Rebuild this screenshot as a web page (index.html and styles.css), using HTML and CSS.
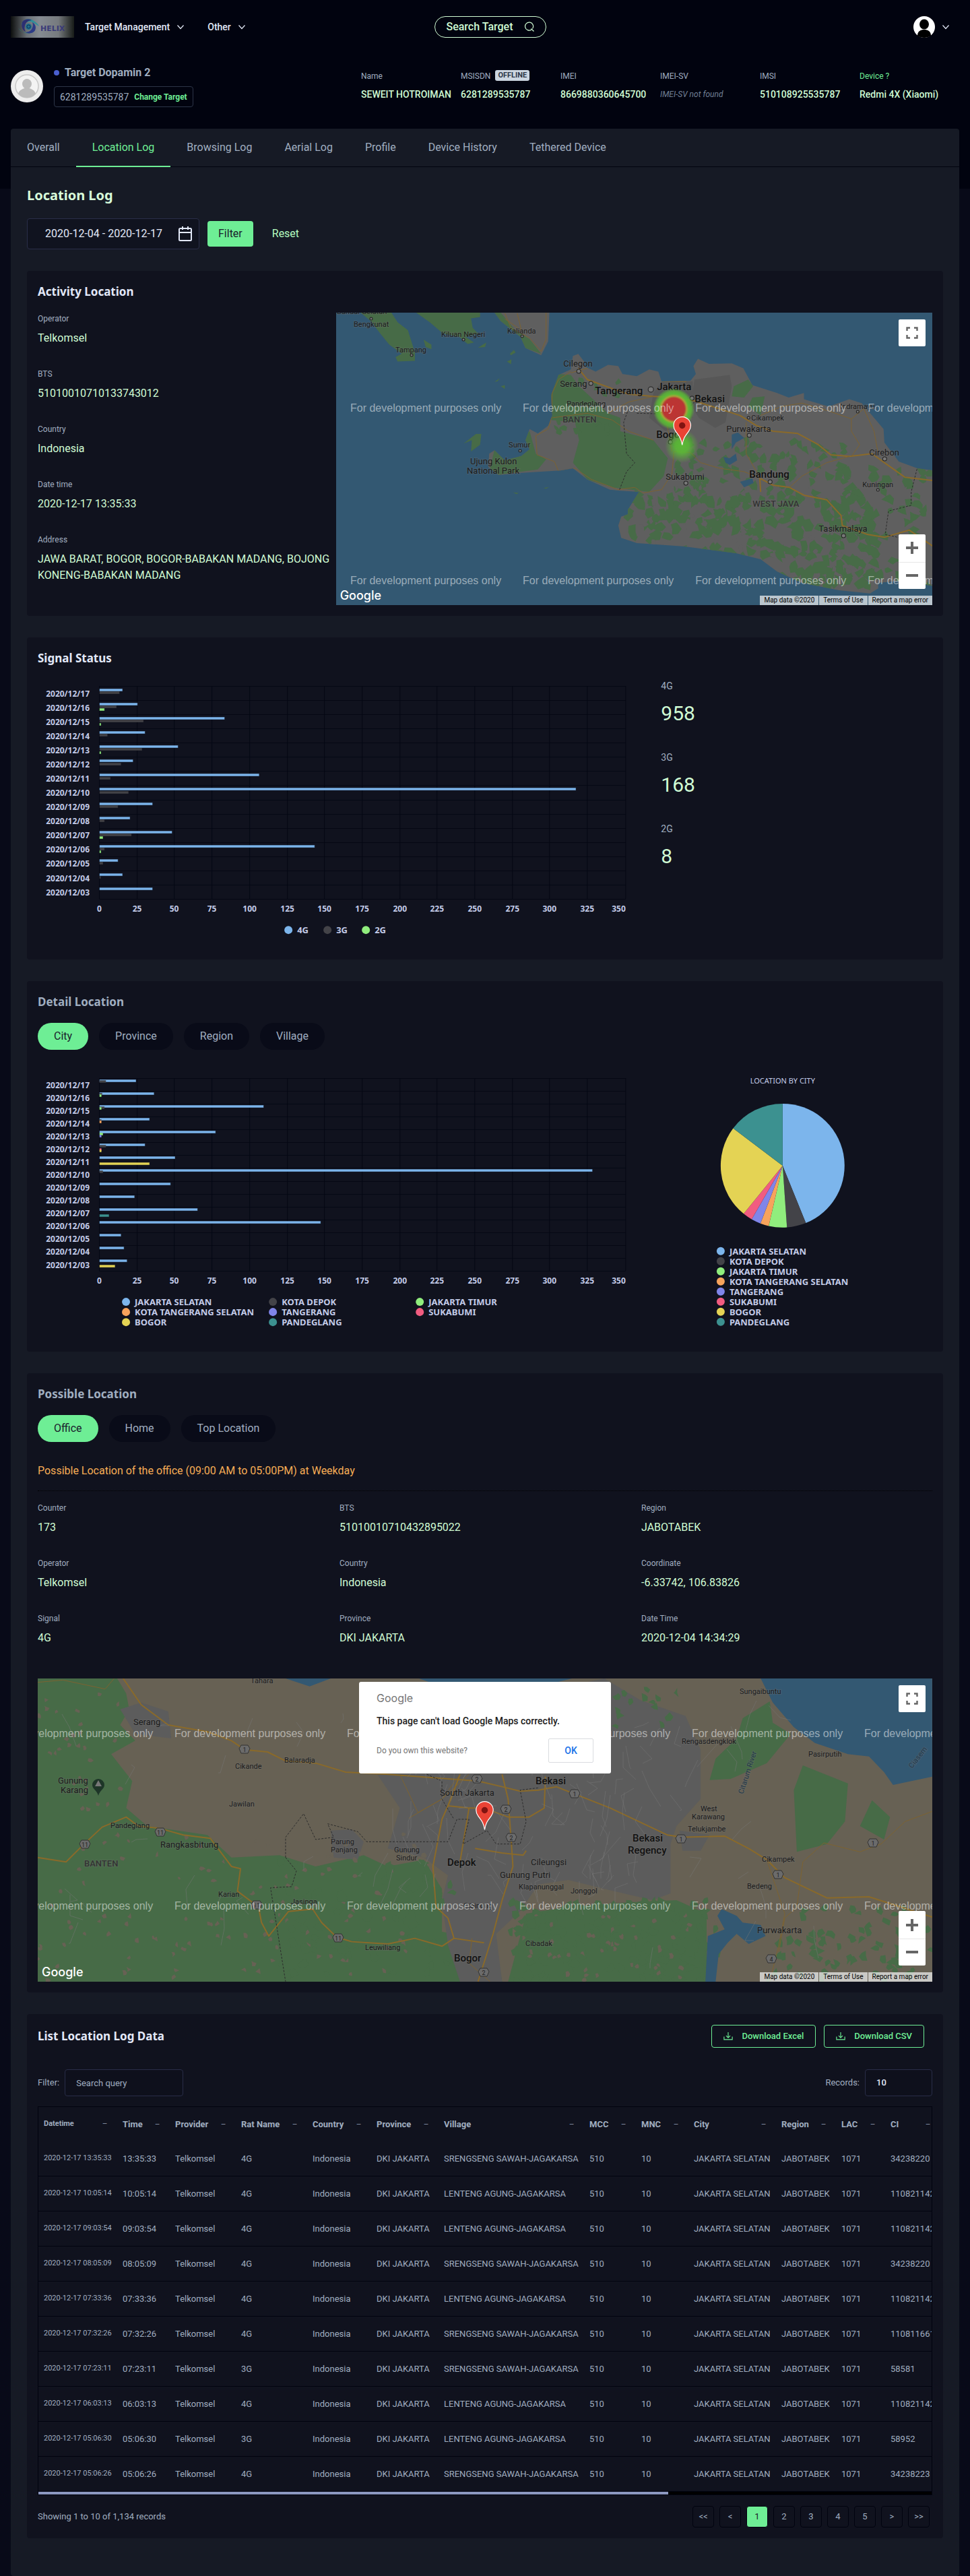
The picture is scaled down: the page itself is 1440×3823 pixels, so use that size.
FILE: index.html
```html
<!DOCTYPE html>
<html lang="en">
<head>
<meta charset="utf-8">
<title>Helix - Location Log</title>
<meta name="viewport" content="width=device-width, initial-scale=1">
<link rel="stylesheet" href="styles.css">
</head>
<body>
<svg class="defs" width="0" height="0" aria-hidden="true">
  <symbol id="chevron" viewBox="0 0 16 16"><path d="M3.500 5.500 8 10.500l4.500-5" fill="none" stroke="currentColor" stroke-width="1.200"/></symbol>
  <symbol id="download" viewBox="0 0 16 16"><path d="M8 1v9M4.500 7 8 10.500 11.500 7M1 8.500v5h14v-5" fill="none" stroke="currentColor" stroke-width="1.300"/></symbol>
  <symbol id="fullscreen" viewBox="0 0 18 18"><path d="M1.500 6V1.500H6M12 1.500h4.500V6M16.500 12v4.500H12M6 16.500H1.500V12" fill="none" stroke="#666" stroke-width="2.400"/></symbol>
  <symbol id="pin" viewBox="0 0 27 43"><path d="M13.500.7C6.400.7.8 6.400.8 13.400c0 3.600 1.200 6.300 3.200 9 5 6.600 7.900 9.700 9.500 20 1.600-10.300 4.500-13.400 9.500-20 2-2.700 3.200-5.400 3.200-9C26.200 6.400 20.600.7 13.500.7z" fill="#ea4335" stroke="#fff" stroke-width="1.200"/><circle cx="13.500" cy="13.500" r="4.700" fill="#811411"/></symbol>
</svg>

<header class="topbar">
  <nav class="topnav">
    <a class="logo" href="#" aria-label="Helix">
      <svg viewBox="0 0 94 32" width="94" height="32">
        <defs><linearGradient id="metal"><stop offset="0" stop-color="#0c0e0d"/><stop offset=".25" stop-color="#6b7076"/><stop offset=".45" stop-color="#858b92"/><stop offset=".75" stop-color="#767a7e"/><stop offset="1" stop-color="#171b18"/></linearGradient></defs>
        <rect width="94" height="32" fill="url(#metal)"/>
        <path d="M11 17c3 7 12 10 24 5-4 5-14 4-18 1-3-2-5-4-6-6z" fill="#23807f"/>
        <path d="M16 13c1-8 10-12 18-6 3 2 6 4 8 8-8-5-10-7-15-7-5 1-8 3-11 5z" fill="#2f8f99"/>
        <path d="M17 9c2-4 9-6 14-3-7 1-9 4-10 8-1 3-1 6 1 9-5-2-7-9-5-14z" fill="#2c2f72"/>
        <path d="M36 21c-2 4-9 6-14 3 7-1 9-4 10-7 1-3 1-5 0-8 5 3 6 8 4 12z" fill="#2c3a86"/>
        <circle cx="26.500" cy="15.500" r="4.500" fill="#1c6f8c"/><circle cx="26.500" cy="15.500" r="2.500" fill="none" stroke="#132a56"/>
        <text x="44" y="22" class="logo-text">HELIX</text>
      </svg>
    </a>
    <button class="nav-item" type="button">Target Management <svg width="16" height="16"><use href="#chevron"/></svg></button>
    <button class="nav-item" type="button">Other <svg width="16" height="16"><use href="#chevron"/></svg></button>
  </nav>
  <button class="search-btn" type="button">Search Target
    <svg width="16" height="16" viewBox="0 0 16 16"><path d="M11 12a6 6 0 1 1 1.500-1.500M10.500 10.500l4 4" fill="none" stroke="currentColor" stroke-width="1.200"/></svg>
  </button>
  <button class="user-btn" type="button" aria-label="Account">
    <svg width="32" height="32" viewBox="0 0 32 32"><circle cx="16" cy="16" r="16" fill="#fff"/><ellipse cx="16" cy="12" rx="7" ry="7.500" fill="#000"/><path d="M6 29c0-7 5-9 10-9s10 2 10 9c-3 2-6 3-10 3s-7-1-10-3z" fill="#000"/></svg>
    <svg width="16" height="16"><use href="#chevron"/></svg>
  </button>
</header>

<section class="target">
  <svg class="avatar" width="48" height="48" viewBox="0 0 48 48"><circle cx="24" cy="24" r="24" fill="#ededed"/><circle cx="24" cy="24" r="17" fill="#f3f3f3" stroke="#c8c8c8" stroke-width="1.500"/><ellipse cx="24" cy="20.500" rx="7" ry="7.500" fill="#bbb"/><path d="M11 35c2-6 7-7 9-8h8c2 1 7 2 9 8a17 17 0 0 1-26 0z" fill="#bbb"/></svg>
  <div class="target-id">
    <div class="target-name"><span class="dot"></span>Target Dopamin 2</div>
    <div class="target-number">6281289535787 <a href="#">Change Target</a></div>
  </div>
  <dl class="info">
    <div><dt>Name</dt><dd>SEWEIT HOTROIMAN</dd></div>
    <div><dt>MSISDN <span class="badge">OFFLINE</span></dt><dd>6281289535787</dd></div>
    <div><dt>IMEI</dt><dd>8669880360645700</dd></div>
    <div><dt>IMEI-SV</dt><dd class="missing">IMEI-SV not found</dd></div>
    <div><dt>IMSI</dt><dd>510108925535787</dd></div>
    <div><dt><a href="#">Device ?</a></dt><dd>Redmi 4X (Xiaomi)</dd></div>
  </dl>
</section>

<main class="content">
  <nav class="tabs">
    <a href="#">Overall</a><a href="#" class="active">Location Log</a><a href="#">Browsing Log</a><a href="#">Aerial Log</a><a href="#">Profile</a><a href="#">Device History</a><a href="#">Tethered Device</a>
  </nav>
  <div class="page">
    <h1>Location Log</h1>
    <form class="filter-row">
      <div class="date-box">
        <input type="text" aria-label="Date range" value="2020-12-04 - 2020-12-17">
        <svg width="20" height="22" viewBox="0 0 20 22"><path d="M2.500 3h15a1.500 1.500 0 0 1 1.500 1.500v15a1.500 1.500 0 0 1-1.500 1.500h-15A1.500 1.500 0 0 1 1 19.500v-15A1.500 1.500 0 0 1 2.500 3zM1 9h18M6 0v5M14 0v5" fill="none" stroke="currentColor" stroke-width="2"/></svg>
      </div>
      <button class="btn-filter" type="button">Filter</button>
      <button class="btn-reset" type="reset">Reset</button>
    </form>

    <section class="panel">
      <h2>Activity Location</h2>
      <div class="activity">
        <dl class="fields">
          <div><dt>Operator</dt><dd>Telkomsel</dd></div>
          <div><dt>BTS</dt><dd>51010010710133743012</dd></div>
          <div><dt>Country</dt><dd>Indonesia</dd></div>
          <div><dt>Date time</dt><dd>2020-12-17 13:35:33</dd></div>
          <div><dt>Address</dt><dd>JAWA BARAT, BOGOR, BOGOR-BABAKAN MADANG, BOJONG KONENG-BABAKAN MADANG</dd></div>
        </dl>
        <div class="map map-activity">
          <svg class="map-canvas" viewBox="0 0 885 434" preserveAspectRatio="xMidYMid slice">
            <defs>
              <clipPath id="java"><path transform="translate(-19 -24) scale(.6122 .3333)" d="M618 256 632 290V310L660 335 690 305 715 310 725 345 760 355 790 325 812 335 820 378 890 375 903 345 897 310 908 278 935 300 990 298 1018 320 1040 395 1100 430 1128 450 1165 430V458L1225 490 1275 458 1305 475 1358 590 1360 650 1395 735 1440 765 1480 775V1290L1400 1265 1345 1275V1300L1325 1322 1250 1308 1160 1275 1100 1225 1060 1170 1000 1143 870 1112 760 1098 722 1075 715 1020 722 980 738 970V950L765 870 720 865 695 860 640 815 605 765 575 775 480 785 425 795 400 760 402 700 415 685 440 730 480 710 500 680 490 640 500 590 520 610 545 575 555 530 552 440 560 400 570 350 600 325 605 265z"/></clipPath>
              <radialGradient id="heat"><stop offset="0" stop-color="#bf3333"/><stop offset=".52" stop-color="#b93633"/><stop offset=".62" stop-color="#a5a33a"/><stop offset=".72" stop-color="#5bb936"/><stop offset=".85" stop-color="#5bb936" stop-opacity=".8"/><stop offset="1" stop-color="#5bb936" stop-opacity="0"/></radialGradient>
              <radialGradient id="warm"><stop offset="0" stop-color="#5bb936"/><stop offset=".4" stop-color="#5bb936" stop-opacity=".9"/><stop offset="1" stop-color="#5bb936" stop-opacity="0"/></radialGradient>
            </defs>
            <rect width="885" height="434" fill="#335872"/>
            <g transform="translate(-19 -24) scale(.6122 .3333)" fill="#476b47">
              <path d="M90 72H165L180 115 205 150 222 250V287L180 290 175 270 190 255 160 215 140 170 115 110z"/>
              <path d="M225 72H380V92L358 98 362 140 375 165 345 180 365 205 350 212 330 180 290 165 258 115z"/>
              <path d="M415 72H548L545 200 528 262 490 230 478 180 430 110z" fill="#5f5f5f"/>
              <path d="M415 72H430L465 150 500 190 528 255 490 230 478 180 430 110z"/>
              <path d="M340 655 370 612H383L380 660 358 690 360 640zM243 192 262 215V235L248 225zM375 228 395 205 392 225zM452 255 462 238 466 250 455 262zM445 290 456 280 455 302zM430 400 440 395V412zM415 380 428 364 422 378zM460 872 474 875 468 880zM534 853 547 848 540 856z"/>
            </g>
            <g clip-path="url(#java)">
              <rect width="885" height="434" fill="#5f5f5f"/>
              <g transform="translate(-19 -24) scale(.6122 .3333)">
                <path d="M570 345 600 350 620 400 690 520 720 540V600L800 640 835 720 825 800 790 870 700 850 640 815 605 740 620 640 610 560 552 550V400zM415 680 500 600 515 700 540 725 520 770 400 800zM995 400 1030 370 1042 400 1020 450 990 445zM1040 450 1070 445 1060 530 1030 490z" fill="#476b47"/>
                <path d="M900 370 985 350 990 400 975 560 950 585 910 540 890 480zM820 380 895 378V540L830 600 790 540 800 430z" fill="#575757"/>
              </g>
              <g id="activity-forest" fill="#476b47"></g>
              <g transform="translate(-19 -24) scale(.6122 .3333)" fill="#335872"><path d="M990 615 1005 605 1020 630 1000 650 990 680zM970 715 985 720 1000 700 1003 730 985 750 975 740zM1010 825 1040 810 1043 830 1020 850z"/></g>
              <g class="roads" transform="translate(-19 -24) scale(.6122 .3333)">
                <path d="M618 320 640 370 700 410 740 435 800 445 850 450 900 465 960 500 1010 530 1050 575 1090 600 1150 610 1200 660 1230 705 1275 712 1330 700 1360 740 1410 805 1480 820M1060 870 1058 810 1090 840 1130 850 1165 885 1220 905 1255 975 1258 1020 1320 1060 1360 1072 1420 1040 1480 1115"/>
                <path class="minor" d="M600 335 570 370 555 430 553 540 545 590 515 620 518 705 560 735 570 778 610 765 650 815 715 860 755 850 775 875 820 860 845 790 850 690 890 695 915 740 960 765 1020 780 1060 810M850 450 830 540 845 690M1025 560V700L1060 810M1275 712 1220 740 1160 800 1130 850M1280 712 1300 660 1280 600V545L1225 510 1160 475 1110 490 1060 530M1280 545 1310 500 1335 600 1345 700M600 340 640 320M555 540 640 520 700 550 740 600 800 640M690 520 740 470 800 445M820 378 880 380"/>
                <path class="border" d="M740 500 728 560 735 700 755 740 735 780 718 860M1445 725 1425 870 1425 930 1370 955 1362 1060 1400 1075M760 520 870 525 905 460"/>
              </g>
            </g>
            <g class="roads" transform="translate(-19 -24) scale(.6122 .3333)"><path class="minor" d="M540 72V190L528 245 500 185 455 140 440 75M440 100 480 150 470 75"/></g>
            <g class="places">
              <text x="1" y="2">Bandar Selatan</text>
              <text x="26" y="21">Bengkunat</text><text x="156" y="36">Kiluan Negeri</text><text x="254" y="31">Kalianda</text><text x="88" y="59">Tampang</text><text x="256" y="200">Sumur</text><text x="342" y="139">Pandeglang</text><text x="616" y="160">Cikampek</text><text x="748" y="143">Indramayu</text><text x="781" y="259">Kuningan</text>
              <g class="mid"><text x="337" y="80">Cilegon</text><text x="332" y="110">Serang</text><text x="579" y="177">Purwakarta</text><text x="489" y="248">Sukabumi</text><text x="791" y="212">Cirebon</text><text x="716" y="325">Tasikmalaya</text><text x="199" y="225">Ujung Kulon</text><text x="194" y="239">National Park</text></g>
              <g class="big"><text x="384" y="121">Tangerang</text><text x="476" y="115">Jakarta</text><text x="532" y="133">Bekasi</text><text x="475" y="186">Bogor</text><text x="613" y="245">Bandung</text></g>
              <g class="region"><text x="336" y="163">BANTEN</text><text x="618" y="288">WEST JAVA</text></g>
            </g>
            <g class="towns"><circle cx="360" cy="87" r="3"/><circle cx="378" cy="105" r="3"/><circle cx="467" cy="114" r="4"/><circle cx="528" cy="127" r="3"/><circle cx="613" cy="182" r="3"/><circle cx="519" cy="253" r="3"/><circle cx="644" cy="251" r="3"/><circle cx="753" cy="331" r="3"/><circle cx="814" cy="217" r="3"/><circle cx="496" cy="192" r="3"/><circle cx="612" cy="156" r="2"/><circle cx="774" cy="147" r="2"/><circle cx="804" cy="263" r="2"/><circle cx="273" cy="205" r="2"/><circle cx="52" cy="9" r="2"/><circle cx="189" cy="40" r="2"/><circle cx="276" cy="35" r="2"/><circle cx="112" cy="63" r="2"/></g>
            <circle cx="501" cy="143" r="31" fill="url(#heat)"/><circle cx="513" cy="198" r="25" fill="url(#warm)"/>
            <g class="watermark"><text x="21" y="147">For development purposes only</text><text x="277" y="147">For development purposes only</text><text x="533" y="147">For development purposes only</text><text x="789" y="147">For development purposes only</text><text x="21" y="403">For development purposes only</text><text x="277" y="403">For development purposes only</text><text x="533" y="403">For development purposes only</text><text x="789" y="403">For development purposes only</text></g>
            <use href="#pin" x="500" y="154" width="27" height="43"/>
          </svg>
          <button class="map-btn map-full" type="button" aria-label="Fullscreen"><svg width="18" height="18"><use href="#fullscreen"/></svg></button>
          <div class="map-zoom"><button type="button" aria-label="Zoom in" class="plus"></button><button type="button" aria-label="Zoom out" class="minus"></button></div>
          <div class="map-brand">Google</div>
          <div class="map-legal"><span>Map data ©2020</span><a href="#">Terms of Use</a><a href="#">Report a map error</a></div>
        </div>
      </div>
    </section>

    <section class="panel">
      <h2>Signal Status</h2>
      <div class="split">
        <svg id="signal-chart" class="chart" viewBox="0 0 885 400"></svg>
        <dl class="totals">
          <div><dt>4G</dt><dd>958</dd></div>
          <div><dt>3G</dt><dd>168</dd></div>
          <div><dt>2G</dt><dd>8</dd></div>
        </dl>
      </div>
    </section>

    <section class="panel">
      <h2 class="muted">Detail Location</h2>
      <div class="pills"><button class="active" type="button">City</button><button type="button">Province</button><button type="button">Region</button><button type="button">Village</button></div>
      <div class="split detail">
        <svg id="city-chart" class="chart" viewBox="0 0 885 400"></svg>
        <svg id="city-pie" class="chart" viewBox="0 0 443 400"></svg>
      </div>
    </section>

    <section class="panel">
      <h2 class="muted">Possible Location</h2>
      <div class="pills"><button class="active" type="button">Office</button><button type="button">Home</button><button type="button">Top Location</button></div>
      <p class="notice">Possible Location of the office (09:00 AM to 05:00PM) at Weekday</p>
      <dl class="fields three">
        <div><dt>Counter</dt><dd>173</dd></div><div><dt>BTS</dt><dd>51010010710432895022</dd></div><div><dt>Region</dt><dd>JABOTABEK</dd></div>
        <div><dt>Operator</dt><dd>Telkomsel</dd></div><div><dt>Country</dt><dd>Indonesia</dd></div><div><dt>Coordinate</dt><dd>-6.33742, 106.83826</dd></div>
        <div><dt>Signal</dt><dd>4G</dd></div><div><dt>Province</dt><dd>DKI JAKARTA</dd></div><div><dt>Date Time</dt><dd>2020-12-04 14:34:29</dd></div>
      </dl>
      <div class="map map-possible">
        <svg class="map-canvas" viewBox="0 0 1328 450" preserveAspectRatio="xMidYMid slice">
          <rect width="1328" height="450" fill="#676154"/>
          <g transform="translate(-16 -21) scale(.8929 .3333)">
            <path d="M18 63H150L165 130 170 200 155 270 180 340 140 400 175 520 165 640 200 720 300 760 340 860 420 850 480 900 560 850 600 900 660 870 690 1000 690 1190 780 1240 790 1413H18z" fill="#476b47"/>
            <path d="M830 1110 900 1080 1000 1060 1080 1050 1130 1110 1130 1413H800zM1235 165 1240 260 1270 310 1230 440 1170 510 1135 515 1145 420 1180 330 1190 240zM1290 450 1365 530 1360 700 1330 800 1280 835 1275 560zM1405 605 1435 680 1425 780 1385 720z" fill="#476b47"/>
            <path d="M560 400 600 330 640 240 960 63 1020 160 1095 230 1120 380 1120 600 1080 720 1070 800 1070 1020 1040 1050 960 1000 900 960 850 980 820 1100 780 1200 790 1413H720L700 1250 690 1050 700 940 660 860 600 820 620 640zM155 200 190 170 235 210 240 330 180 310zM505 740 540 735 560 790 550 870 510 860zM1085 740 1135 760 1120 830 1090 830z" fill="#5c5c5c"/>
          </g>
          <g id="possible-forest"></g>
          <g transform="translate(-16 -21) scale(.8929 .3333)" fill="#335872"><path d="M1220 63H1505V500L1440 537 1425 480 1400 410 1365 400 1310 350 1275 280 1240 170zM430 63H505L470 98zM652 63H906L880 80H670zM1155 1090 1180 1120 1190 1150 1220 1160 1228 1210 1200 1245 1180 1200 1165 1240 1150 1290 1145 1413H1128L1132 1210 1160 1180 1148 1120z"/></g>
          <g class="roads" transform="translate(-16 -21) scale(.8929 .3333)">
            <path d="M160 63 190 180 235 270 300 300 340 340 362 380 400 390 430 430 480 440 530 480 600 490 750 520 790 545 820 565 850 560 880 545 970 640 1065 760 1090 770 1160 765 1200 820 1230 870 1260 950 1330 1040 1400 1035 1505 1125M18 860 65 880 95 800 125 725 165 680 185 720 220 730 260 760 305 775 340 900 355 910 350 1010 385 1080 390 1150 402 1210 435 1100 475 1090 490 1150 515 1215 540 1235 600 1245 645 1220 690 1255 710 1220 760 1240M720 490 705 600 690 690 675 900 680 1080 700 1130 710 1220M720 490 700 630 735 640 760 640 800 680 835 680 860 640 862 500M790 490 800 600 805 780 808 900 790 1050 775 1200 750 1413M745 820 790 840 825 850 830 830M735 640 720 880"/>
            <path class="minor" d="M18 80 60 70 130 110 145 63M620 490 650 660 690 600 735 490M635 685 690 600 720 490M1230 870 1260 1110 1250 1250 1235 1413M1505 655 1460 700 1420 800 1385 835 1325 795 1290 880 1280 1080 1260 1130 1250 1280M740 1220 735 1330 770 1413"/>
            <path class="border" d="M430 860 430 770 460 665 480 780 510 770 500 710 550 745 565 790 700 790 715 690 735 690 725 800 765 740 780 800 820 800 830 700 820 560 850 550M430 860 448 920 440 990 405 995 430 1413M690 600 710 690M665 490 690 520V600"/>
          </g>
          <g id="streets" class="streets"></g>
          <g class="places">
            <text x="316" y="7">Tahara</text><text x="366" y="125">Balaradja</text><text x="293" y="134">Cikande</text><text x="284" y="190">Jawilan</text><text x="108" y="222">Pandeglang</text><text x="435" y="246">Parung</text><text x="435" y="258">Panjang</text><text x="529" y="258">Gunung</text><text x="532" y="270">Sindur</text><text x="268" y="324">Karian</text><text x="376" y="335">Jasinga</text><text x="486" y="403">Leuwiliang</text><text x="714" y="313">Klapanunggal</text><text x="791" y="319">Jonggol</text><text x="724" y="397">Cibadak</text><text x="632" y="341">Cibinong</text><text x="1042" y="23">Sungaibuntu</text><text x="956" y="97">Rengasdengklok</text><text x="1144" y="116">Pasirputih</text><text x="984" y="197">West</text><text x="971" y="209">Karawang</text><text x="965" y="227">Telukjambe</text><text x="1075" y="272">Cikampek</text><text x="1053" y="312">Bedeng</text>
            <g class="mid"><text x="30" y="156">Gunung</text><text x="34" y="170">Karang</text><text x="142" y="69">Serang</text><text x="182" y="251">Rangkasbitung</text><text x="597" y="174">South Jakarta</text><text x="732" y="277">Cileungsi</text><text x="686" y="296">Gunung Putri</text><text x="1068" y="378">Purwakarta</text></g>
            <g class="big"><text x="608" y="278">Depok</text><text x="618" y="420">Bogor</text><text x="739" y="157">Bekasi</text><text x="883" y="242">Bekasi</text><text x="876" y="260">Regency</text></g>
            <g class="region"><text x="69" y="279">BANTEN</text></g>
            <text class="river" transform="translate(1047 172) rotate(-72)">Citarum River</text>
            <text class="river" transform="translate(1298 134) rotate(-52)">Ciasem</text>
          </g>
          <path d="M90 174c-2-8-9-10-9-16a9 9 0 0 1 18 0c0 6-7 8-9 16z" fill="#1e3528"/><path d="M85 160 90 151 95 160z" fill="#777"/>
          <g id="shields" class="shields"></g>
          <g class="watermark"><text x="-53" y="87">For development purposes only</text><text x="203" y="87">For development purposes only</text><text x="459" y="87">For development purposes only</text><text x="715" y="87">For development purposes only</text><text x="971" y="87">For development purposes only</text><text x="1227" y="87">For development purposes only</text><text x="-53" y="343">For development purposes only</text><text x="203" y="343">For development purposes only</text><text x="459" y="343">For development purposes only</text><text x="715" y="343">For development purposes only</text><text x="971" y="343">For development purposes only</text><text x="1227" y="343">For development purposes only</text></g>
          <use href="#pin" x="650" y="182" width="27" height="43"/>
        </svg>
        <div class="map-dialog">
          <div class="dialog-brand">Google</div>
          <p>This page can't load Google Maps correctly.</p>
          <div class="dialog-foot"><a href="#">Do you own this website?</a><button type="button">OK</button></div>
        </div>
        <button class="map-btn map-full" type="button" aria-label="Fullscreen"><svg width="18" height="18"><use href="#fullscreen"/></svg></button>
        <div class="map-zoom"><button type="button" aria-label="Zoom in" class="plus"></button><button type="button" aria-label="Zoom out" class="minus"></button></div>
        <div class="map-brand">Google</div>
        <div class="map-legal"><span>Map data ©2020</span><a href="#">Terms of Use</a><a href="#">Report a map error</a></div>
      </div>
    </section>

    <section class="panel">
      <div class="list-head">
        <h2>List Location Log Data</h2>
        <button class="btn-outline" type="button"><svg width="14" height="14"><use href="#download"/></svg>Download Excel</button>
        <button class="btn-outline" type="button"><svg width="14" height="14"><use href="#download"/></svg>Download CSV</button>
      </div>
      <div class="list-tools">
        <label for="q">Filter:</label><input id="q" class="field query" type="text" placeholder="Search query">
        <label for="records" class="push">Records:</label><select id="records" class="field records"><option>10</option><option>25</option></select>
      </div>
      <div class="table-box">
        <table>
          <colgroup><col class="w117"><col class="w78"><col class="w98"><col class="w106"><col class="w95"><col class="w100"><col class="w216"><col class="w77"><col class="w78"><col class="w130"><col class="w89"><col class="w73"><col class="w82"></colgroup>
          <thead><tr><th>Datetime</th><th>Time</th><th>Provider</th><th>Rat Name</th><th>Country</th><th>Province</th><th>Village</th><th>MCC</th><th>MNC</th><th>City</th><th>Region</th><th>LAC</th><th>CI</th></tr></thead>
          <tbody>
            <tr><td>2020-12-17 13:35:33</td><td>13:35:33</td><td>Telkomsel</td><td>4G</td><td>Indonesia</td><td>DKI JAKARTA</td><td>SRENGSENG SAWAH-JAGAKARSA</td><td>510</td><td>10</td><td>JAKARTA SELATAN</td><td>JABOTABEK</td><td>1071</td><td>34238220</td></tr>
            <tr><td>2020-12-17 10:05:14</td><td>10:05:14</td><td>Telkomsel</td><td>4G</td><td>Indonesia</td><td>DKI JAKARTA</td><td>LENTENG AGUNG-JAGAKARSA</td><td>510</td><td>10</td><td>JAKARTA SELATAN</td><td>JABOTABEK</td><td>1071</td><td>110821142</td></tr>
            <tr><td>2020-12-17 09:03:54</td><td>09:03:54</td><td>Telkomsel</td><td>4G</td><td>Indonesia</td><td>DKI JAKARTA</td><td>LENTENG AGUNG-JAGAKARSA</td><td>510</td><td>10</td><td>JAKARTA SELATAN</td><td>JABOTABEK</td><td>1071</td><td>110821142</td></tr>
            <tr><td>2020-12-17 08:05:09</td><td>08:05:09</td><td>Telkomsel</td><td>4G</td><td>Indonesia</td><td>DKI JAKARTA</td><td>SRENGSENG SAWAH-JAGAKARSA</td><td>510</td><td>10</td><td>JAKARTA SELATAN</td><td>JABOTABEK</td><td>1071</td><td>34238220</td></tr>
            <tr><td>2020-12-17 07:33:36</td><td>07:33:36</td><td>Telkomsel</td><td>4G</td><td>Indonesia</td><td>DKI JAKARTA</td><td>LENTENG AGUNG-JAGAKARSA</td><td>510</td><td>10</td><td>JAKARTA SELATAN</td><td>JABOTABEK</td><td>1071</td><td>110821142</td></tr>
            <tr><td>2020-12-17 07:32:26</td><td>07:32:26</td><td>Telkomsel</td><td>4G</td><td>Indonesia</td><td>DKI JAKARTA</td><td>SRENGSENG SAWAH-JAGAKARSA</td><td>510</td><td>10</td><td>JAKARTA SELATAN</td><td>JABOTABEK</td><td>1071</td><td>110811661</td></tr>
            <tr><td>2020-12-17 07:23:11</td><td>07:23:11</td><td>Telkomsel</td><td>3G</td><td>Indonesia</td><td>DKI JAKARTA</td><td>SRENGSENG SAWAH-JAGAKARSA</td><td>510</td><td>10</td><td>JAKARTA SELATAN</td><td>JABOTABEK</td><td>1071</td><td>58581</td></tr>
            <tr><td>2020-12-17 06:03:13</td><td>06:03:13</td><td>Telkomsel</td><td>4G</td><td>Indonesia</td><td>DKI JAKARTA</td><td>LENTENG AGUNG-JAGAKARSA</td><td>510</td><td>10</td><td>JAKARTA SELATAN</td><td>JABOTABEK</td><td>1071</td><td>110821142</td></tr>
            <tr><td>2020-12-17 05:06:30</td><td>05:06:30</td><td>Telkomsel</td><td>3G</td><td>Indonesia</td><td>DKI JAKARTA</td><td>LENTENG AGUNG-JAGAKARSA</td><td>510</td><td>10</td><td>JAKARTA SELATAN</td><td>JABOTABEK</td><td>1071</td><td>58952</td></tr>
            <tr><td>2020-12-17 05:06:26</td><td>05:06:26</td><td>Telkomsel</td><td>4G</td><td>Indonesia</td><td>DKI JAKARTA</td><td>SRENGSENG SAWAH-JAGAKARSA</td><td>510</td><td>10</td><td>JAKARTA SELATAN</td><td>JABOTABEK</td><td>1071</td><td>34238223</td></tr>
          </tbody>
        </table>
        <div class="scrollbar"><div class="thumb"></div></div>
      </div>
      <div class="list-foot">
        <span>Showing 1 to 10 of 1,134 records</span>
        <nav class="pager"><button type="button">&lt;&lt;</button><button type="button">&lt;</button><button type="button" class="active">1</button><button type="button">2</button><button type="button">3</button><button type="button">4</button><button type="button">5</button><button type="button">&gt;</button><button type="button">&gt;&gt;</button></nav>
      </div>
    </section>
  </div>
</main>
<script src="charts.js"></script>
</body>
</html>
```
FILE: styles.css
```css
* { box-sizing: border-box; }
body {
  margin: 0;
  color: #a0aec0;
  background: linear-gradient(#01030f 280px, #080a18 280px);
  font-family: Roboto, "Liberation Sans", sans-serif;
  font-size: 16px;
  line-height: 24px;
}
button, input, select { font: inherit; color: inherit; }
button { margin: 0; padding: 0; border: 0; background: none; cursor: pointer; }
a { color: inherit; text-decoration: none; }
dl, dd, p, h1, h2 { margin: 0; }
svg { display: block; flex: none; }
.defs { position: absolute; }

.topbar { display: grid; grid-template-columns: 1fr auto 1fr; align-items: center; height: 80px; padding: 0 16px; color: #e2e8f8; }
.topnav { display: flex; align-items: center; }
.logo { margin-right: 16px; }
.logo-text { font: 700 11px "DejaVu Sans", sans-serif; fill: #3a3b78; }
.nav-item { display: flex; align-items: center; gap: 8px; margin-right: 32px; font-size: 14px; font-weight: 500; }
.search-btn { display: flex; align-items: center; gap: 16px; height: 32px; margin-left: 16px; padding: 0 16px; border: 1px solid #d0fcd4; border-radius: 16px; color: #d0fcd4; font-weight: 500; }
.user-btn { display: flex; align-items: center; gap: 8px; justify-self: end; margin-right: 12px; }

.target { display: flex; padding: 16px 16px 32px; }
.avatar { margin: 8px 16px 0 0; }
.target-name { display: flex; align-items: center; gap: 8px; font-weight: 700; }
.dot { width: 8px; height: 8px; border-radius: 50%; background: #4a5fd0; }
.target-number { display: flex; align-items: center; gap: 8px; height: 31px; margin-top: 8px; padding: 0 8px; border: 1px solid #2d3548; border-radius: 4px; font-size: 14px; }
.target-number a { color: #6eee95; font-size: 12px; font-weight: 700; }
.info { display: grid; grid-template-columns: repeat(6, 148px); margin: 8px 0 0 auto; font-size: 12px; }
.info dt { height: 16px; line-height: 18px; }
.info dd { margin-top: 8px; color: #d0fcd4; font-size: 14px; font-weight: 500; }
.info dd.missing { color: #718096; font-size: 12px; font-style: italic; font-weight: 400; }
.info a { color: #6eee95; }
.badge { display: inline-block; height: 16px; margin-left: 4px; padding: 0 4px; border-radius: 3px; background: #cbd5e0; color: #2d3748; font-size: 11px; font-weight: 700; line-height: 16px; vertical-align: top; }

.content { margin: 0 16px; border-radius: 4px; background: #161a25; }
.tabs { display: flex; height: 57px; border-bottom: 1px solid #01030f; }
.tabs a { height: 57px; padding: 16px 24px 0; }
.tabs a.active { border-bottom: 2px solid #6eee95; color: #6eee95; }
.page { padding: 26px 24px 56px; }
h1, h2 { font-family: "Noto Sans", "Open Sans", sans-serif; font-weight: 700; }
h1 { color: #d8fcda; font-size: 20px; line-height: 32px; }
h2 { color: #e2e8f8; font-size: 17px; line-height: 30px; }
h2.muted { color: #a0aec0; }

.filter-row { display: flex; align-items: center; margin: 18px 0 32px; }
.date-box { display: flex; align-items: center; width: 256px; height: 46px; margin-right: 12px; padding-right: 10px; border: 1px solid #292d48; border-radius: 4px; background: #10131f; color: #e2e8f8; }
.date-box input { flex: 1; width: 100px; padding: 0 0 0 26px; border: 0; outline: 0; background: none; }
.btn-filter { height: 38px; margin-right: 28px; padding: 0 16px; border-radius: 4px; background: #6eee95; color: #1a202c; }
.btn-reset { color: #b4fcc0; }

.panel { padding: 16px; border-radius: 4px; background: #10121e; }
.panel + .panel { margin-top: 32px; }
.activity { display: grid; grid-template-columns: 1fr 2fr; margin-top: 16px; }
.fields { display: grid; gap: 32px 16px; align-content: start; }
.fields.three { grid-template-columns: repeat(3, 1fr); padding: 16px 0 48px; border-top: 1px dotted #000; }
.fields dt { font-size: 12px; line-height: 18px; }
.fields dd { margin-top: 8px; color: #d0fcd4; }

.map { position: relative; overflow: hidden; background: #335872; color: #000; }
.map-activity { height: 434px; }
.map-possible { height: 450px; }
.map-canvas { width: 100%; height: 100%; }
.roads { fill: none; stroke: #8a6a2a; }
.roads path { stroke-width: 2px; stroke-linejoin: round; vector-effect: non-scaling-stroke; }
.roads .minor { stroke: #7d6331; stroke-width: 1px; }
.roads .border { stroke: #2c2c2c; stroke-width: 1px; stroke-dasharray: 3 2; }
.streets { fill: none; stroke: #777; stroke-opacity: .5; }
.places { font: 11px Roboto, sans-serif; fill: #1c1c1c; stroke: #737373; stroke-width: 2px; stroke-opacity: .3; paint-order: stroke; }
.places .mid { font-size: 13px; }
.places .big { font-size: 15px; font-weight: 500; fill: #111; }
.places .region { font-size: 13px; font-weight: 500; fill: #333; }
.river { fill: #22384a; }
.towns { fill: #777; stroke: #222; }
.watermark { font: 16px "Liberation Sans", Arial, sans-serif; fill: #fff; fill-opacity: .5; }
.shields path { fill: #6b6b6b; stroke: #333; }
.shields text { font: 9px Roboto, sans-serif; fill: #222; text-anchor: middle; }
.map-btn { position: absolute; display: grid; place-items: center; width: 40px; height: 40px; border-radius: 2px; background: #fff; }
.map-full { top: 10px; right: 10px; }
.map-zoom { position: absolute; right: 10px; bottom: 24px; display: grid; width: 40px; height: 81px; border-radius: 2px; background: #fff; }
.map-zoom button { background: linear-gradient(#666, #666) center / 18px 4px no-repeat; }
.map-zoom .plus { background: linear-gradient(#666, #666) center / 18px 4px no-repeat, linear-gradient(#666, #666) center / 4px 18px no-repeat; box-shadow: 0 1px 0 #e6e6e6; }
.map-brand { position: absolute; left: 6px; bottom: 2px; color: #fff; font: 500 18px/24px Inter, "Liberation Sans", sans-serif; }
.map-legal { position: absolute; right: 0; bottom: 0; display: flex; gap: 1px; font-size: 10px; line-height: 14px; }
.map-legal > * { padding: 0 6px; background: rgba(245, 245, 245, .7); }
.map-dialog { position: absolute; top: 5px; left: 50%; width: 374px; margin-left: -187px; padding: 12px 26px 16px; border-radius: 3px; background: #fff; }
.dialog-brand { color: #757575; font: 16px/24px Inter, "Liberation Sans", sans-serif; }
.map-dialog p { margin: 10px 0 14px; color: #212121; font-size: 14px; font-weight: 500; }
.dialog-foot { display: flex; align-items: center; justify-content: space-between; color: #757575; font-size: 12px; }
.dialog-foot button { width: 67px; height: 36px; border: 1px solid #dadce0; border-radius: 2px; color: #1a73e8; font-size: 14px; font-weight: 500; }

.split { display: grid; grid-template-columns: 2fr 1fr; margin-top: 16px; }
.split.detail { margin-top: 32px; }
.chart { width: 100%; height: auto; font: 700 12px "Noto Sans", "Open Sans", sans-serif; fill: #c3cbe8; }
.chart .grid { stroke: #050814; }
.chart .end { text-anchor: end; }
.chart .center { text-anchor: middle; }
.chart .title { font-size: 11px; font-weight: 400; }
.chart .legend { font-size: 13px; }
.totals { padding-left: 40px; }
.totals > div { margin-bottom: 36px; }
.totals dt { font-size: 14px; line-height: 20px; }
.totals dd { margin-top: 12px; color: #d0fcd4; font-size: 30px; line-height: 38px; }

.pills { display: flex; gap: 16px; margin-top: 16px; }
.pills button { height: 40px; padding: 0 24px; border-radius: 20px; background: #090b18; }
.pills .active { background: #6eee95; color: #1a202c; }
.notice { margin: 31px 0 17px; color: #f6ad55; }

.list-head { display: flex; align-items: center; gap: 12px; padding-right: 12px; }
.list-head h2 { margin-right: auto; }
.btn-outline { display: flex; align-items: center; gap: 13px; height: 34px; padding: 0 17px; border: 1px solid #6eee95; border-radius: 4px; color: #6eee95; font-size: 13px; font-weight: 500; }
.list-tools { display: flex; align-items: center; gap: 8px; margin: 32px 0 15px; font-size: 13px; }
.list-tools .push { margin-left: auto; }
.field { appearance: none; height: 40px; padding: 0 16px; border: 1px solid #292d48; border-radius: 4px; outline: 0; background: #0e101c; color: #e2e8f8; }
.field::placeholder { color: #a0aec0; }
.query { width: 176px; }
.records { width: 100px; font-weight: 500; }
.table-box { overflow: hidden; border: 1px solid #01030f; }
table { width: 1339px; border-collapse: collapse; table-layout: fixed; font-size: 13px; }
th, td { height: 52px; padding: 1px 8px 0; border-bottom: 1px solid #01030f; text-align: left; white-space: nowrap; }
th { height: 50px; border: 0; font-weight: 700; }
th::after { content: "—"; float: right; margin-right: 7px; font-size: 9px; font-weight: 400; }
th:first-child, td:first-child { padding-bottom: 2px; font-size: 11px; }
.w73 { width: 73px; } .w77 { width: 77px; } .w78 { width: 78px; } .w82 { width: 82px; } .w89 { width: 89px; } .w95 { width: 95px; } .w98 { width: 98px; } .w100 { width: 100px; } .w106 { width: 106px; } .w117 { width: 117px; } .w130 { width: 130px; } .w216 { width: 216px; }
.scrollbar { height: 4px; background: #000; }
.thumb { width: 70.5%; height: 4px; background: #8c98c0; }
.list-foot { display: flex; align-items: center; justify-content: space-between; margin-top: 16px; padding-right: 4px; font-size: 13px; }
.pager { display: flex; gap: 8px; }
.pager button { width: 32px; height: 32px; border: 1px solid #01030f; border-radius: 4px; }
.pager .active { background: #6eee95; color: #1a202c; }
```
FILE: charts.js
```js
const DATES = ['17', '16', '15', '14', '13', '12', '11', '10', '09', '08', '07', '06', '05', '04', '03'];
const CITY = [
  { name: 'JAKARTA SELATAN', color: '#7cb5ec', to: 158, data: [24, 36, 109, 33, 77, 30, 50, 328, 47, 23, 65, 147, 14, 16, 18] },
  { name: 'KOTA DEPOK', color: '#434348', to: 176, data: [4, 1.5, 3, 1, 0, 4, 0, 2] },
  { name: 'JAKARTA TIMUR', color: '#90ed7d', to: 193, data: [0, 1, 1, 0, 2] },
  { name: 'KOTA TANGERANG SELATAN', color: '#f7a35c', to: 201, data: [0, 0, 0, 1] },
  { name: 'TANGERANG', color: '#8085e9', to: 210, data: [0, 0, 0, 0, 1] },
  { name: 'SUKABUMI', color: '#f15c80', to: 219, data: [0, 0, 0, 0, 0, 1] },
  { name: 'BOGOR', color: '#e4d354', to: 307, data: [0, 0, 0, 0, 0, 1, 33, 0, 0, 0, 0, 0, 0, 0, 10] },
  { name: 'PANDEGLANG', color: '#3c9190', to: 360, data: [0, 0, 0, 0, 0, 0, 0, 0, 0, 0, 6] }
];
const SIGNAL = [
  { name: '4G', color: '#7cb5ec', data: [15, 25, 83, 30, 52, 22, 106, 317, 35, 20, 48, 143, 12, 15, 35] },
  { name: '3G', color: '#434348', data: [13, 11, 29, 5, 28, 14, 7, 19, 12, 3, 21, 3, 2, 0.5] },
  { name: '2G', color: '#90ed7d', data: [0, 3, 0.7, 0, 0.7, 0, 0, 0, 0, 0, 2, 0.7] }
];
const LEFT = 91.5, RIGHT = 872.5, TOP = 10, UNIT = 2.228;

const dot = (x, y, s) => `<circle cx="${x}" cy="${y}" r="6" fill="${s.color}"/><text class="legend" x="${x + 13}" y="${y + 5}">${s.name}</text>`;

function barChart(id, series, bottom, first, step, legend) {
  const row = (bottom - TOP) / DATES.length;
  let out = '';
  for (let i = 0; i <= DATES.length; i++) {
    const y = Math.round(TOP + i * row) + 0.5;
    out += `<line class="grid" x1="${LEFT}" x2="${RIGHT}" y1="${y}" y2="${y}"/>`;
  }
  for (let v = 0; v < 350; v += 25) {
    const x = Math.round(LEFT + v * UNIT - 0.5) + 0.5;
    out += `<line class="grid" x1="${x}" x2="${x}" y1="${TOP}" y2="${bottom}"/><text class="center" x="${x}" y="${bottom + 19}">${v}</text>`;
  }
  out += `<line class="grid" x1="${RIGHT}" x2="${RIGHT}" y1="${TOP}" y2="${bottom}"/><text class="end" x="${RIGHT}" y="${bottom + 19}">350</text>`;
  DATES.forEach((d, i) => { out += `<text class="end" x="77" y="${TOP + (i + 0.5) * row + 5}">2020/12/${d}</text>`; });
  series.forEach((s, k) => s.data.forEach((v, i) => {
    if (v) out += `<rect x="${LEFT + 0.5}" y="${Math.round(TOP + i * row + first + k * step) + 0.5}" width="${v * UNIT}" height="3" fill="${s.color}" stroke="${s.color}" stroke-opacity=".5"/>`;
  }));
  document.getElementById(id).innerHTML = out + legend;
}

barChart('signal-chart', SIGNAL, 326, 4, 4.2, dot(372, 372, SIGNAL[0]) + dot(430, 372, SIGNAL[1]) + dot(487, 372, SIGNAL[2]));
barChart('city-chart', CITY, 296, 2, 1.4, CITY.map((s, i) => dot(131 + (i % 3) * 218, 342 + Math.floor(i / 3) * 15, s)).join(''));

const at = deg => `${221 + 92 * Math.sin(deg * Math.PI / 180)} ${140 - 92 * Math.cos(deg * Math.PI / 180)}`;
let from = 0, pie = '<text class="center title" x="221" y="18">LOCATION BY CITY</text>';
CITY.forEach((s, i) => {
  pie += `<path d="M221 140L${at(from)}A92 92 0 0 1 ${at(s.to)}z" fill="${s.color}"/>` + dot(129, 267 + i * 15, s);
  from = s.to;
});
document.getElementById('city-pie').innerHTML = pie;

// Repeatable noise for the forest patches and side streets of the maps
let seed = 7;
const rnd = () => (seed = (seed * 16807) % 2147483647) / 2147483647;
function patches(n, x0, y0, x1, y1, size, fill) {
  let d = '';
  for (let i = 0; i < n; i++) {
    const x = x0 + rnd() * (x1 - x0), y = y0 + rnd() * (y1 - y0), points = [];
    for (let a = 0; a < 6; a++) {
      const r = size * (0.3 + rnd());
      points.push(`${(x + r * Math.cos(a)).toFixed(1)} ${(y + r * Math.sin(a)).toFixed(1)}`);
    }
    d += `M${points.join('L')}z`;
  }
  return `<path d="${d}" fill="${fill}"/>`;
}
document.getElementById('activity-forest').innerHTML =
  patches(230, 420, 270, 800, 410, 9, '#476b47') + patches(110, 500, 190, 760, 290, 7, '#476b47') +
  patches(60, 740, 230, 885, 410, 9, '#476b47') + patches(40, 440, 260, 780, 400, 5, '#5f5f5f') + patches(20, 320, 100, 420, 180, 6, '#476b47');
document.getElementById('possible-forest').innerHTML =
  patches(110, 0, 230, 580, 450, 4, '#676154') + patches(30, 0, 20, 130, 200, 4, '#676154') +
  patches(130, 700, 330, 1010, 450, 8, '#476b47') + patches(70, 1080, 340, 1328, 450, 7, '#476b47') +
  patches(60, 360, 260, 620, 440, 8, '#476b47') + patches(50, 720, 350, 1010, 450, 4, '#676154') + patches(14, 850, 15, 960, 80, 6, '#476b47');
let lanes = '';
for (let i = 0; i < 130; i++) {
  const inner = i < 80, x = inner ? 520 + rnd() * 380 : rnd() * 1250, y = inner ? 60 + rnd() * 250 : 20 + rnd() * 400;
  lanes += `M${x | 0} ${y | 0}l${(rnd() * 40 - 20) | 0} ${(rnd() * 40) | 0} ${(rnd() * 40 - 20) | 0} ${(rnd() * 30) | 0}`;
}
document.getElementById('streets').innerHTML = `<path d="${lanes}"/>`;
document.getElementById('shields').innerHTML = [[307, 105, 1], [182, 228, 11], [70, 246, 11], [325, 336, 11], [446, 385, 11], [652, 149, 2], [695, 194, 2], [703, 236, 2], [797, 171, 1], [955, 238, 1], [1240, 244, 1], [1099, 291, 1], [1089, 416, 4], [662, 436, 2]]
  .map(([x, y, n]) => `<path d="M${x - 5} ${y - 6}h10l3 5-3 7h-10l-3-7z"/><text x="${x}" y="${y + 4}">${n}</text>`).join('');
```
